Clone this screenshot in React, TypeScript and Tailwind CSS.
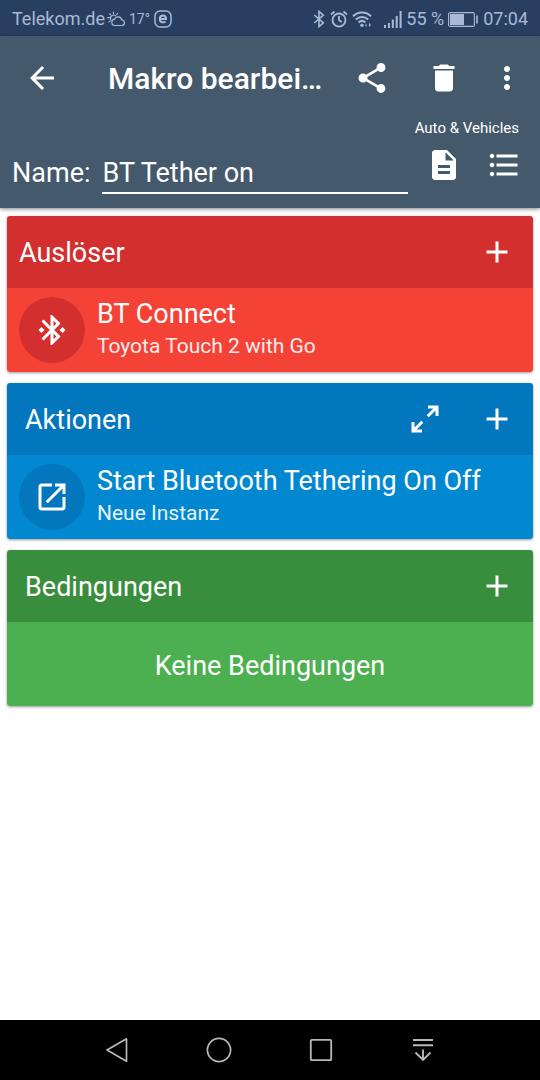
import React, { useState } from "react";

type IconProps = {
  d: string;
  className?: string;
};

const ICONS = {
  back: "M20 11H7.83l5.59-5.59L12 4l-8 8 8 8 1.41-1.41L7.83 13H20v-2z",
  share:
    "M18 16.08c-.76 0-1.44.3-1.96.77L8.91 12.7c.05-.23.09-.46.09-.7s-.04-.47-.09-.7l7.05-4.11c.54.5 1.25.81 2.04.81 1.66 0 3-1.34 3-3s-1.34-3-3-3-3 1.34-3 3c0 .24.04.47.09.7L8.04 9.81C7.5 9.31 6.79 9 6 9c-1.66 0-3 1.34-3 3s1.34 3 3 3c.79 0 1.5-.31 2.04-.81l7.12 4.16c-.05.21-.08.43-.08.65 0 1.61 1.31 2.92 2.92 2.92s2.92-1.31 2.92-2.92-1.31-2.92-2.92-2.92z",
  trash: "M6 19c0 1.1.9 2 2 2h8c1.1 0 2-.9 2-2V7H6v12zM19 4h-3.5l-1-1h-5l-1 1H5v2h14V4z",
  more: "M12 8c1.1 0 2-.9 2-2s-.9-2-2-2-2 .9-2 2 .9 2 2 2zm0 2c-1.1 0-2 .9-2 2s.9 2 2 2 2-.9 2-2-.9-2-2-2zm0 6c-1.1 0-2 .9-2 2s.9 2 2 2 2-.9 2-2-.9-2-2-2z",
  note: "M14 2H6c-1.1 0-1.99.9-1.99 2L4 20c0 1.1.89 2 1.99 2H18c1.1 0 2-.9 2-2V8l-6-6zm2 16H8v-2h8v2zm0-4H8v-2h8v2zm-3-5V3.5L18.5 9H13z",
  list: "M4 10.5c-.83 0-1.5.67-1.5 1.5s.67 1.5 1.5 1.5 1.5-.67 1.5-1.5-.67-1.5-1.5-1.5zm0-6c-.83 0-1.5.67-1.5 1.5S3.17 7.5 4 7.5 5.5 6.83 5.5 6 4.83 4.5 4 4.5zm0 12c-.83 0-1.5.68-1.5 1.5s.68 1.5 1.5 1.5 1.5-.68 1.5-1.5-.67-1.5-1.5-1.5zM7 19h14v-2H7v2zm0-6h14v-2H7v2zm0-8v2h14V5H7z",
  plus: "M19 13h-6v6h-2v-6H5v-2h6V5h2v6h6v2z",
  expand:
    "M10 21v-2H6.41l4.5-4.5-1.41-1.41-4.5 4.5V14H3v7h7zm4.5-10.09l4.5-4.5V10h2V3h-7v2h3.59l-4.5 4.5 1.41 1.41z",
  bluetooth:
    "M7 12l-2-2-2 2 2 2 2-2zm10.71-4.29L12 2h-1v7.59L6.41 5 5 6.41 10.59 12 5 17.59 6.41 19 11 14.41V22h1l5.71-5.71-4.3-4.29 4.3-4.29zM13 5.83l1.88 1.88L13 9.59V5.83zm1.88 10.46L13 18.17v-3.76l1.88 1.88zM19 10l-2 2 2 2 2-2-2-2z",
  launch:
    "M19 19H5V5h7V3H5c-1.11 0-2 .9-2 2v14c0 1.1.89 2 2 2h14c1.1 0 2-.9 2-2v-7h-2v7zM14 3v2h3.59l-9.83 9.83 1.41 1.41L19 6.41V10h2V3h-7z",
};

const Icon: React.FC<IconProps> = ({ d, className = "" }) => (
  <svg viewBox="0 0 24 24" fill="currentColor" className={`size-9 shrink-0 ${className}`} aria-hidden="true">
    <path d={d} />
  </svg>
);

const StatusBar: React.FC = () => (
  <div className="flex h-9 items-center justify-between bg-[#293f62] px-3 pt-0.5 text-lg text-[#a9b9d6]">
    <div className="flex items-center">
      <span>Telekom.de</span>
      {/* Weather */}
      <svg viewBox="0 0 18 16" className="ml-0.5 h-4 w-[18px]" fill="none" stroke="currentColor" strokeWidth="1.2" strokeLinecap="round">
        <path d="M7.5 14.5h7a2.800 2.800 0 0 0 .3-5.6 3.9 3.9 0 0 0-7.4-.7 3.2 3.2 0 0 0 .1 6.3z" />
        <path d="M3.8 9.2a3.4 3.4 0 0 1 5-4.4M6.5 1v1.4M2.6 2.7l1 1M.7 6.7h1.500M10.6 2.4l-.8 1M1.8 11l1-.7" />
      </svg>
      <span className="ml-1 text-sm">17°</span>
      <svg viewBox="0 0 18 18" className="ml-1 size-[18px]" fill="none" stroke="currentColor">
        <rect x="1" y="1" width="16" height="16" rx="5" strokeWidth="1.5" />
        <path d="M5.8 9h6.2c0-2.2-1.1-3.5-3-3.5S5.800 7 5.8 9s1.2 3.4 3.2 3.400c1.2 0 2-.3 2.7-.9" strokeWidth="2" />
      </svg>
    </div>

    <div className="flex items-center">
      <svg viewBox="0 0 12 18" className="h-[18px] w-3" fill="none" stroke="currentColor" strokeWidth="1.6">
        <path d="M1.300 5l9 7.8L6 16.600V1.4l4.300 3.8-9 7.8" />
      </svg>
      <svg viewBox="0 0 18 18" className="ml-[5px] size-[18px]" fill="none" stroke="currentColor" strokeWidth="1.8">
        <circle cx="9" cy="10" r="6.5" />
        <path d="M9 6v4.300l2.8 1.8M1 4.5L4.500 1.5M17 4.5l-3.500-3" />
      </svg>
      <svg viewBox="0 0 20 18" className="ml-1 h-[18px] w-5" fill="none" stroke="currentColor" strokeWidth="2">
        <path d="M1 6.3c5.2-5 12.8-5 18 0M3.8 9.500c3.7-3.5 8.7-3.5 12.400 0M6.600 12.500c2-1.9 4.8-1.9 6.8 0" />
        <circle cx="10" cy="15.3" r="1.7" fill="currentColor" stroke="none" />
        <path d="M14.500 13.500v3.5l-1.500-1.7zM17 12.800l2 2.2-2 2.2z" fill="currentColor" stroke="none" />
      </svg>
      <svg viewBox="0 0 18 17" className="ml-3 h-[17px] w-[18px]" fill="currentColor">
        <path d="M0 14h2v3H0zM3.9 12h2v5h-2zM7.8 8.500h2V17h-2zM11.700 5h2v12h-2zM15.600 0h2v17h-2z" />
      </svg>
      <span className="ml-1">55 %</span>
      <svg viewBox="0 0 30 15" className="ml-1 h-[15px] w-[30px]" fill="none" stroke="currentColor">
        <rect x=".6" y=".6" width="25.8" height="13.8" rx="1.5" strokeWidth="1.1" />
        <rect x="2" y="2" width="14" height="11" fill="currentColor" stroke="none" />
        <path d="M29 3.500v8" strokeWidth="1.6" />
      </svg>
      <span className="ml-[5px]">07:04</span>
    </div>
  </div>
);

type SectionProps = {
  title: string;
  headClass: string;
  bodyClass: string;
  expandable?: boolean;
  children: React.ReactNode;
};

const Section: React.FC<SectionProps> = ({ title, headClass, bodyClass, expandable, children }) => (
  <section className="overflow-hidden rounded-[3px] shadow-[0_1px_3px_rgba(0,0,0,0.4)]">
    <div className={`flex h-[72px] items-center gap-9 pr-[18px] ${headClass}`}>
      <h2 className="flex-1 pt-0.5 text-[27px] leading-8">{title}</h2>
      {expandable && (
        <button type="button" aria-label="Erweitern">
          <Icon d={ICONS.expand} />
        </button>
      )}
      <button type="button" aria-label={`${title} hinzufügen`}>
        <Icon d={ICONS.plus} />
      </button>
    </div>
    <div className={`flex h-[84px] items-center px-3 ${bodyClass}`}>{children}</div>
  </section>
);

type EntryProps = {
  icon: string;
  iconClass: string;
  title: string;
  detail: string;
};

const Entry: React.FC<EntryProps> = ({ icon, iconClass, title, detail }) => (
  <button type="button" className="flex w-full items-center gap-3 text-left">
    <span className={`flex size-[66px] shrink-0 items-center justify-center rounded-full ${iconClass}`}>
      <Icon d={icon} />
    </span>
    <span className="flex min-w-0 flex-col">
      <span className="truncate text-[27px] leading-8">{title}</span>
      <span className="truncate text-[21px] leading-8 opacity-90">{detail}</span>
    </span>
  </button>
);

const NavBar: React.FC = () => (
  <nav className="flex h-[60px] items-center justify-center bg-black text-[#b8b8b8]">
    <button type="button" aria-label="Zurück" className="flex w-[102px] justify-center">
      <svg viewBox="0 0 26 26" className="size-[26px]" fill="none" stroke="currentColor" strokeWidth="1.7" strokeLinejoin="round">
        <path d="M22.5 1.8v22.4L3 13z" />
      </svg>
    </button>
    <button type="button" aria-label="Startseite" className="flex w-[102px] justify-center">
      <svg viewBox="0 0 26 26" className="size-[26px]" fill="none" stroke="currentColor" strokeWidth="1.7">
        <circle cx="13" cy="13" r="11.6" />
      </svg>
    </button>
    <button type="button" aria-label="Übersicht" className="flex w-[102px] justify-center">
      <svg viewBox="0 0 26 26" className="size-[26px]" fill="none" stroke="currentColor" strokeWidth="1.8">
        <rect x="2.8" y="2.8" width="20.4" height="20.4" rx="1" />
      </svg>
    </button>
    <button type="button" aria-label="Leiste ausblenden" className="flex w-[102px] justify-center">
      <svg viewBox="0 0 26 26" className="size-[26px]" fill="none" stroke="currentColor" strokeWidth="1.9">
        <path d="M3 3h20M3 8.200h20M13 12.500v10.800M5.500 15.500L13 23l7.500-7.500" />
      </svg>
    </button>
  </nav>
);

export default function App() {
  const [name, setName] = useState("BT Tether on");

  return (
    <div className="flex min-h-screen flex-col bg-white font-[Roboto,sans-serif] text-white">
      <StatusBar />

      <header className="relative bg-[#45596d] shadow-[0_1px_4px_rgba(0,0,0,0.5)]">
        {/* Toolbar */}
        <div className="flex h-[84px] items-center pr-[15px] pl-6">
          <button type="button" aria-label="Zurück">
            <Icon d={ICONS.back} />
          </button>
          <h1 className="ml-12 flex-1 truncate pt-0.5 text-[30px] leading-9 font-medium">Makro bearbei…</h1>
          <div className="flex items-center">
            <button type="button" aria-label="Teilen">
              <Icon d={ICONS.share} />
            </button>
            <button type="button" aria-label="Löschen" className="ml-9">
              <Icon d={ICONS.trash} />
            </button>
            <button type="button" aria-label="Weitere Optionen" className="ml-[27px]">
              <Icon d={ICONS.more} />
            </button>
          </div>
        </div>

        {/* Macro name and category */}
        <div className="flex items-end pr-[18px] pb-[14px] pl-3">
          <label htmlFor="macro-name" className="pb-[5px] text-[27px] leading-8">
            Name:
          </label>
          <input
            id="macro-name"
            type="text"
            value={name}
            onChange={(e) => setName(e.target.value)}
            className="ml-3 min-w-0 flex-1 border-b-2 border-white bg-transparent pb-[3px] text-[27px] leading-8 outline-none"
          />
          <div className="ml-[18px] flex w-24 flex-col items-end gap-[11px] pb-[11px]">
            <span className="pr-[3px] text-[15px] leading-4 whitespace-nowrap">Auto &amp; Vehicles</span>
            <div className="flex gap-6">
              <button type="button" aria-label="Beschreibung">
                <Icon d={ICONS.note} />
              </button>
              <button type="button" aria-label="Kategorie">
                <Icon d={ICONS.list} />
              </button>
            </div>
          </div>
        </div>
      </header>

      <main className="flex flex-1 flex-col gap-[11px] px-[7px] pt-2">
        <Section title="Auslöser" headClass="bg-[#d32f2f] pl-3" bodyClass="bg-[#f44336]">
          <Entry icon={ICONS.bluetooth} iconClass="bg-[#d32f2f]" title="BT Connect" detail="Toyota Touch 2 with Go" />
        </Section>
        <Section title="Aktionen" headClass="bg-[#0277bd] pl-[18px]" bodyClass="bg-[#0288d1]" expandable>
          <Entry icon={ICONS.launch} iconClass="bg-[#0277bd]" title="Start Bluetooth Tethering On Off" detail="Neue Instanz" />
        </Section>
        <Section title="Bedingungen" headClass="bg-[#388e3c] pl-[18px]" bodyClass="bg-[#4caf50]">
          <p className="flex-1 pt-1 text-center text-[27px] leading-8">Keine Bedingungen</p>
        </Section>
      </main>

      <NavBar />
    </div>
  );
}
